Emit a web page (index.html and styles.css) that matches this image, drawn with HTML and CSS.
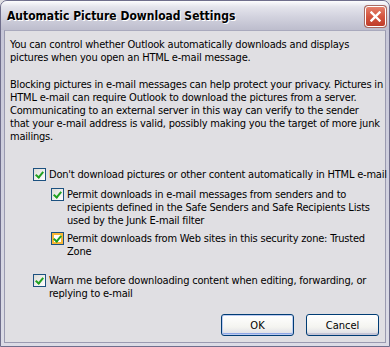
FILE: index.html
```html
<!DOCTYPE html>
<html lang="en">
<head>
    <meta charset="UTF-8">
    <meta name="viewport" content="width=device-width, initial-scale=1.0">
    <title>Automatic Picture Download Settings</title>
    <link rel="stylesheet" href="styles.css">
</head>
<body>

    <div class="window">
        <div class="titlebar">
            <span class="title">Automatic Picture Download Settings</span>
            <div class="close-btn" title="Close">
                <svg width="11" height="11" viewBox="0 0 11 11">
                    <path d="M1.5 1.5 L9.5 9.5 M9.5 1.5 L1.5 9.5" stroke="#ffffff" stroke-width="2.4" stroke-linecap="square" fill="none"/>
                </svg>
            </div>
        </div>

        <div class="client">
            <p class="intro">You can control whether Outlook automatically downloads and displays<br>pictures when you open an HTML e-mail message.</p>

            <p class="intro">Blocking pictures in e-mail messages can help protect your privacy. Pictures in<br>HTML e-mail can require Outlook to download the pictures from a server.<br>Communicating to an external server in this way can verify to the sender<br>that your e-mail address is valid, possibly making you the target of more junk<br>mailings.</p>

            <div class="options">
                <label class="option">
                    <span class="check"></span>
                    <span class="label-text">Don't download pictures or other content automatically in HTML e-mail</span>
                </label>

                <div class="sub-options">
                    <label class="option">
                        <span class="check"></span>
                        <span class="label-text">Permit downloads in e-mail messages from senders and to<br>recipients defined in the Safe Senders and Safe Recipients Lists<br>used by the Junk E-mail filter</span>
                    </label>
                    <label class="option">
                        <span class="check hover"></span>
                        <span class="label-text">Permit downloads from Web sites in this security zone: Trusted<br>Zone</span>
                    </label>
                </div>

                <label class="option warn">
                    <span class="check"></span>
                    <span class="label-text">Warn me before downloading content when editing, forwarding, or<br>replying to e-mail</span>
                </label>
            </div>

            <div class="buttons">
                <button class="btn default">OK</button>
                <button class="btn">Cancel</button>
            </div>
        </div>
    </div>

</body>
</html>
```

FILE: styles.css
```css
/* Reset */
* {
    padding: 0;
    margin: 0;
    box-sizing: border-box;
}

body {
    font-family: "DejaVu Sans Condensed", "DejaVu Sans", sans-serif;
    font-stretch: condensed;
    font-size: 11px;
    line-height: 13px;
    letter-spacing: -0.2px;
    color: #000;
    background-color: #e0dfe3;
}

/* Window frame */
.window {
    width: 390px;
    height: 347px;
    border: 1px solid #6f6e8c;
    border-radius: 7px 7px 0 0;
    background: linear-gradient(#c4c4d6, #dcdce6);
    display: flex;
    flex-direction: column;
    overflow: hidden;
}

.titlebar {
    height: 29px;
    display: flex;
    align-items: center;
    justify-content: space-between;
    padding: 0 3px 0 6px;
    background: linear-gradient(#fdfdfe 0%, #e4e4ec 20%, #d2d2de 55%, #bdbdcd 100%);
}

.title {
    font-weight: bold;
    font-size: 12px;
    letter-spacing: 0;
    color: #000;
    text-shadow: 1px 1px 0 #fff;
    padding-top: 2px;
}

.close-btn {
    width: 21px;
    height: 21px;
    border: 1px solid #ffffff;
    border-radius: 3px;
    background-color: #d4553f;
    background-image: linear-gradient(#e4806c, #d4553f 50%, #bf3d2a);
    box-shadow: 0 0 0 1px #a86a62;
    display: flex;
    align-items: center;
    justify-content: center;
    margin-top: 2px;
}

/* Client area */
.client {
    flex: 1;
    margin: 0 3px 3px 3px;
    border: 1px solid #9a9ab0;
    border-top-color: #a9a9bd;
    background-color: #e0dfe3;
    padding: 7px 4px 0 5px;
    display: flex;
    flex-direction: column;
}

.intro {
    margin-bottom: 14px;
    white-space: nowrap;
}

/* Checkbox options */
.options {
    padding-left: 23px;
    margin-top: 11px;
    display: flex;
    flex-direction: column;
}

.option {
    display: flex;
    align-items: flex-start;
    gap: 3px;
    white-space: nowrap;
}

.sub-options {
    padding-left: 18px;
    margin-top: 7px;
    display: flex;
    flex-direction: column;
    gap: 5px;
}

.warn {
    margin-top: 16px;
}

.check {
    width: 13px;
    height: 13px;
    flex-shrink: 0;
    border: 1px solid #1c5180;
    background: linear-gradient(135deg, #dcdcd7, #fff);
    position: relative;
}

.check::after {
    content: "";
    position: absolute;
    left: 3px;
    top: 1px;
    width: 3px;
    height: 6px;
    border: solid #21a121;
    border-width: 0 2px 2px 0;
    transform: rotate(40deg);
}

.check.hover {
    background: #fff;
    box-shadow: inset 0 0 0 2px #f8b636;
}

/* Buttons */
.buttons {
    margin-top: auto;
    margin-bottom: 6px;
    display: flex;
    justify-content: flex-end;
    gap: 12px;
    padding-right: 2px;
}

.btn {
    width: 73px;
    height: 22px;
    font-family: "DejaVu Sans Condensed", "DejaVu Sans", sans-serif;
    font-stretch: condensed;
    font-size: 11px;
    color: #000;
    border: 1px solid #003c74;
    border-radius: 3px;
    background: linear-gradient(#ffffff, #f4f4f0 60%, #dcdce4);
    box-shadow: inset 0 -2px 0 #c5c5d6;
}

.btn.default {
    box-shadow: inset 0 0 0 1px #bccbf0, inset 0 -2px 0 #8ea6e6;
}
```
